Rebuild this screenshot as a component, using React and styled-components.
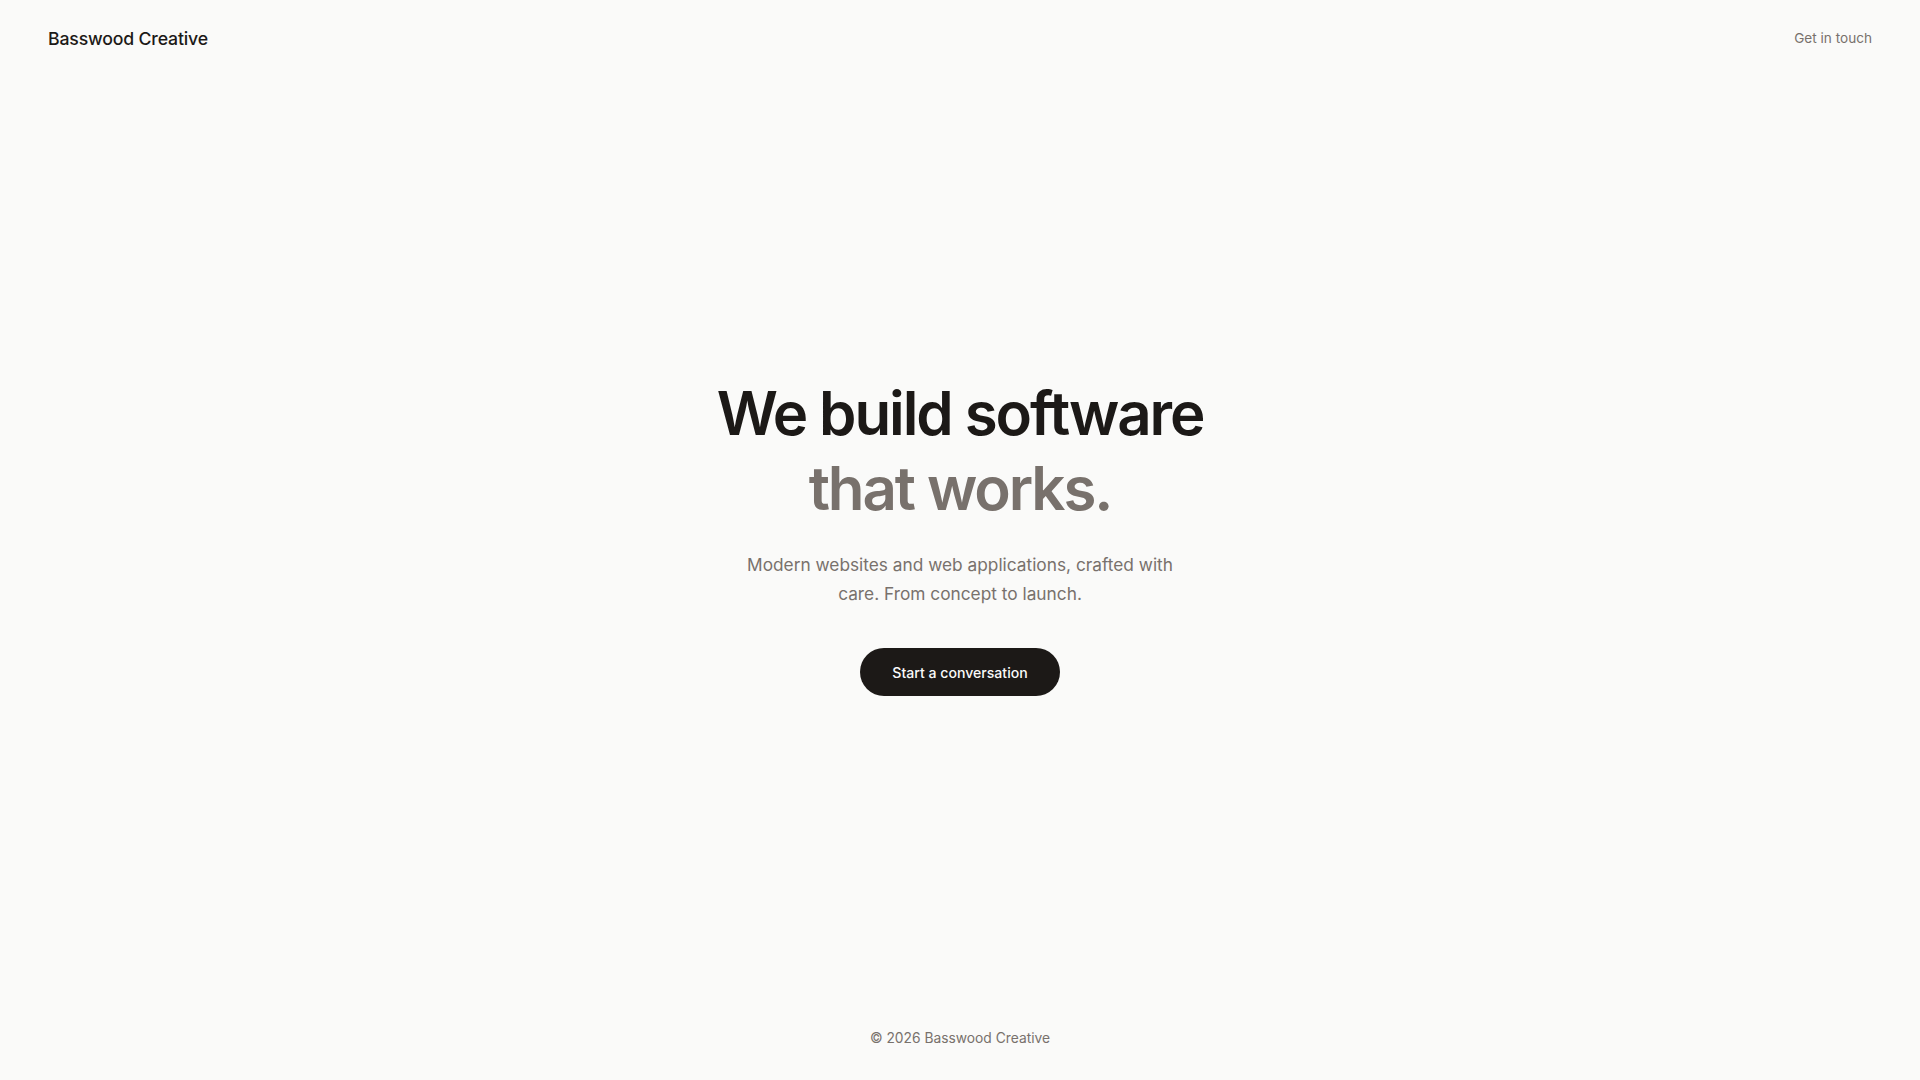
import React from "react";
import styled, { createGlobalStyle } from "styled-components";

const GlobalStyle = createGlobalStyle`
  html, body {
    margin: 0;
    padding: 0;
    background: #fafaf9;
  }
  body {
    font-family: Inter, "Liberation Sans", sans-serif;
    color: #1c1917;
    -webkit-font-smoothing: antialiased;
  }
  * {
    box-sizing: border-box;
  }
`;

const Page = styled.div`
  min-height: 100vh;
  display: flex;
  flex-direction: column;
  background: #fafaf9;
`;

const Header = styled.header`
  height: 76px;
  padding: 0 48px;
  display: flex;
  align-items: center;
  justify-content: space-between;
`;

const Logo = styled.a`
  font-size: 17.7px;
  font-weight: 500;
  letter-spacing: -0.01em;
  color: #1c1917;
  text-decoration: none;
`;

const NavLink = styled.a`
  font-size: 13.6px;
  color: #78716c;
  text-decoration: none;
`;

const Hero = styled.main`
  flex: 1;
  display: flex;
  flex-direction: column;
  align-items: center;
  justify-content: center;
  text-align: center;
  padding-bottom: 6px;
`;

const Title = styled.h1`
  margin: 0;
  font-size: 60px;
  font-weight: 600;
  line-height: 75px;
  letter-spacing: -0.035em;
  color: #1c1917;
`;

const Muted = styled.span`
  display: block;
  color: #78716c;
`;

const Lead = styled.p`
  margin: 24px 0 0;
  max-width: 440px;
  font-size: 17.3px;
  line-height: 29px;
  color: #78716c;
`;

const Button = styled.a`
  margin-top: 40px;
  height: 48px;
  padding: 0 32px;
  display: inline-flex;
  align-items: center;
  border-radius: 999px;
  background: #1c1917;
  color: #fafaf9;
  font-size: 14.1px;
  font-weight: 500;
  text-decoration: none;
`;

const Footer = styled.footer`
  padding: 28px 0 34px;
  text-align: center;
  font-size: 13.8px;
  color: #78716c;
`;

export default function App() {
  return (
    <Page>
      <GlobalStyle />
      <Header>
        <Logo href="#">Basswood Creative</Logo>
        <NavLink href="#">Get in touch</NavLink>
      </Header>
      <Hero>
        <Title>
          We build software
          <Muted>that works.</Muted>
        </Title>
        <Lead>
          Modern websites and web applications, crafted with care. From concept
          to launch.
        </Lead>
        <Button href="#">Start a conversation</Button>
      </Hero>
      <Footer>© 2026 Basswood Creative</Footer>
    </Page>
  );
}
